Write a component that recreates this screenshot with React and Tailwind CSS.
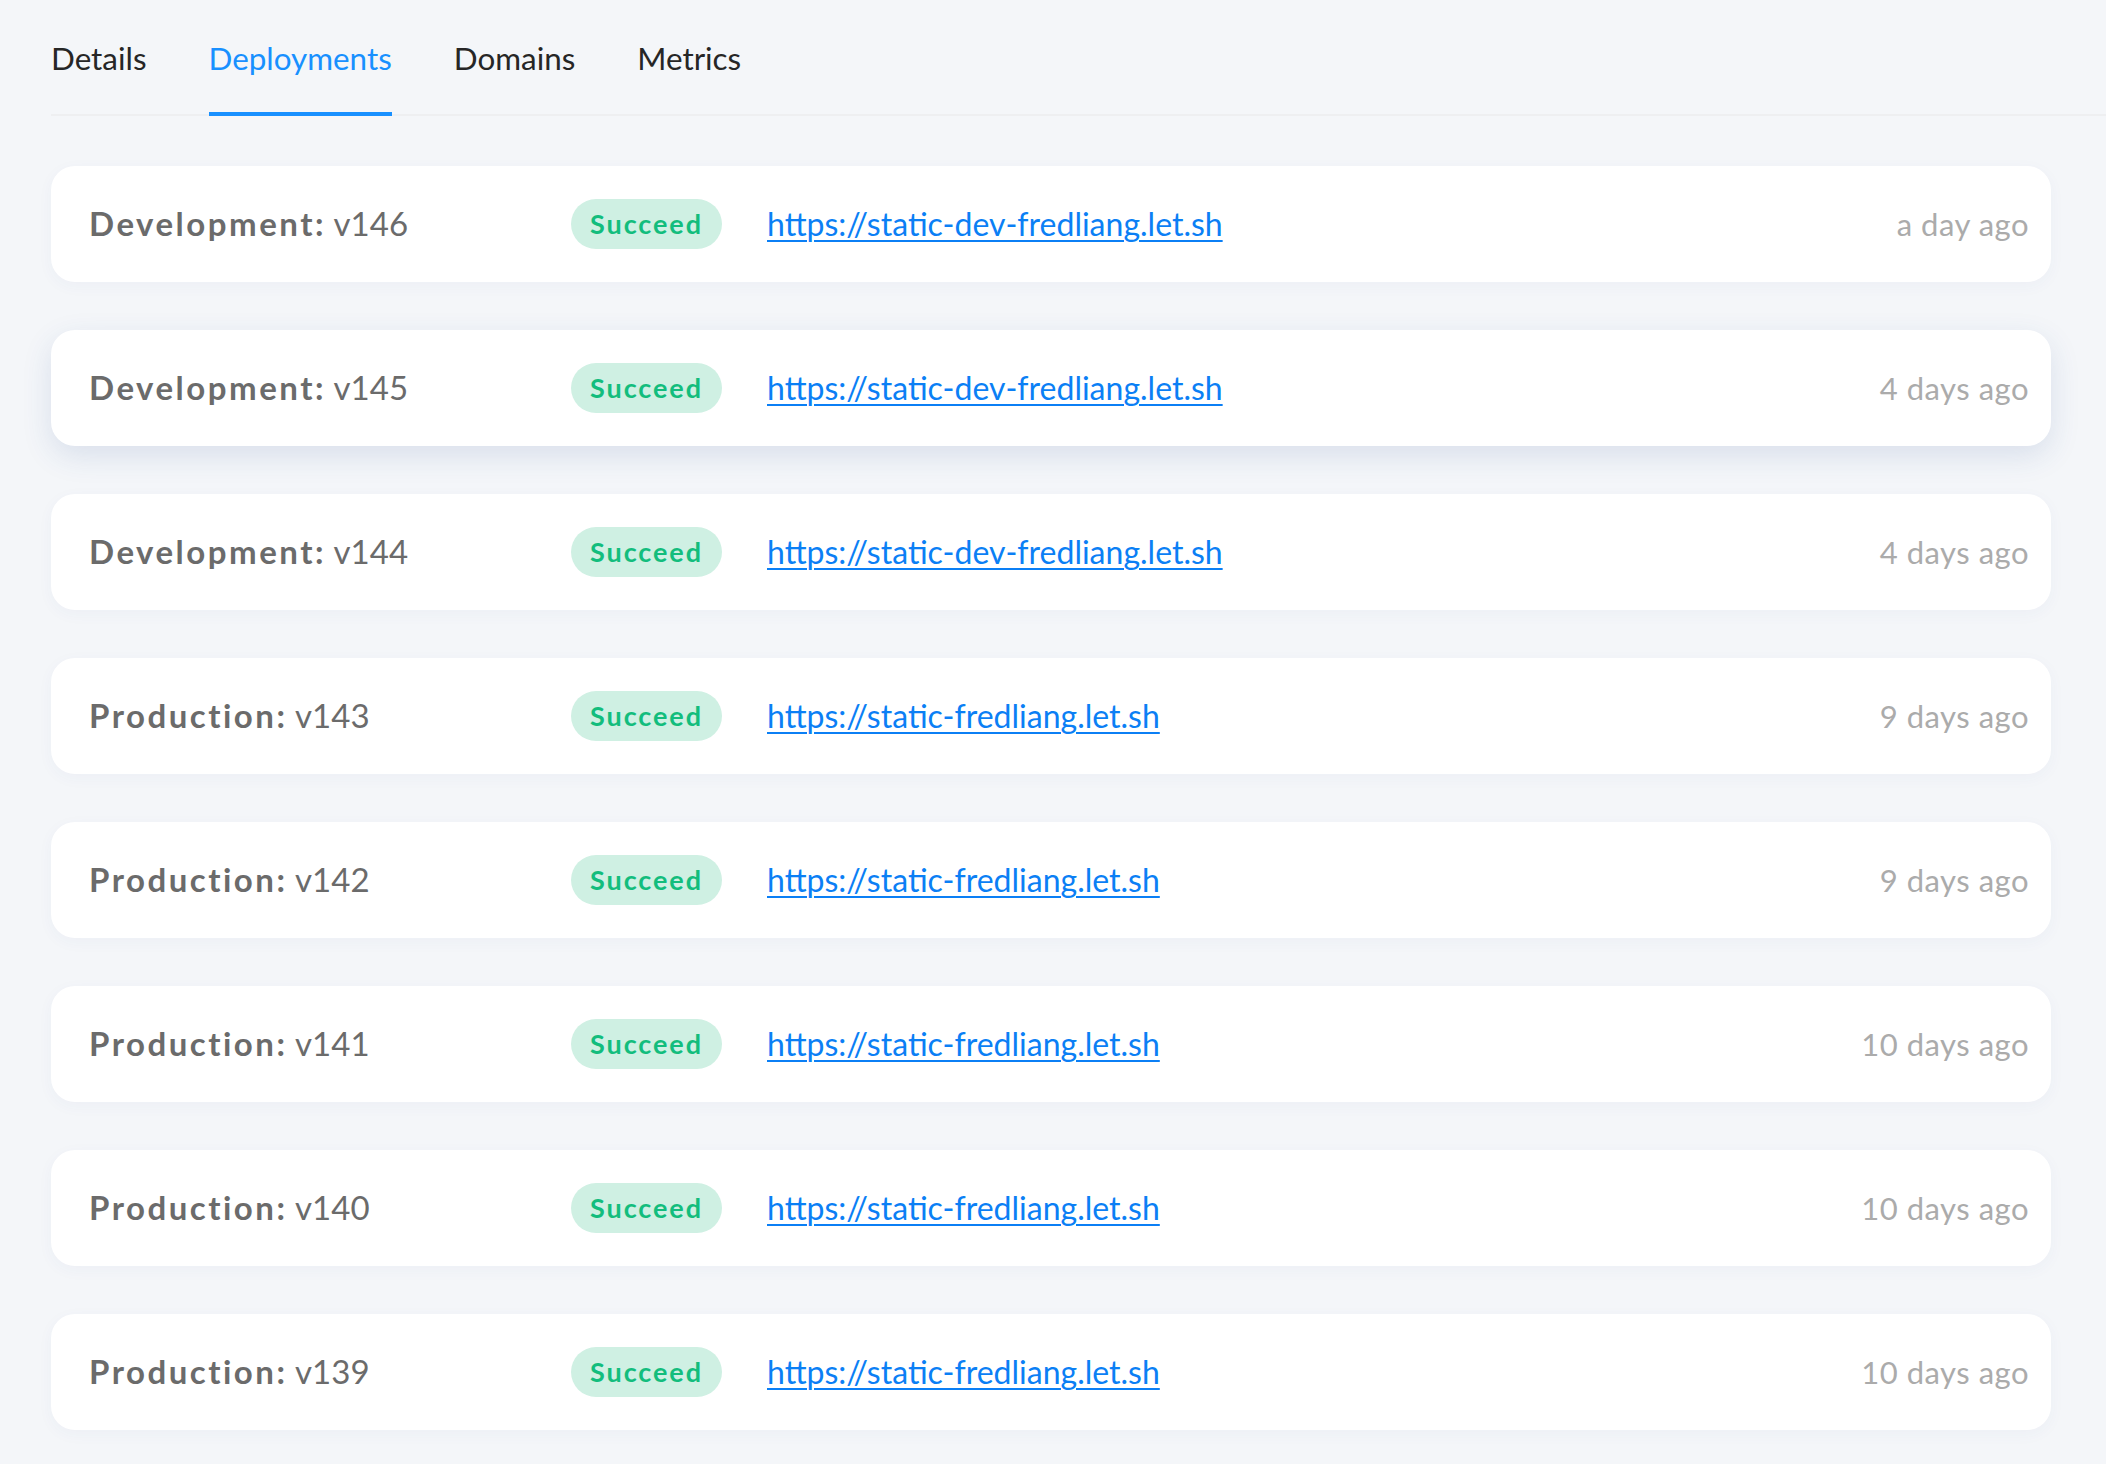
import React from "react";

const rows = [
  { env: "Development", v: "v146", url: "https://static-dev-fredliang.let.sh", t: "a day ago" },
  { env: "Development", v: "v145", url: "https://static-dev-fredliang.let.sh", t: "4 days ago", hover: true },
  { env: "Development", v: "v144", url: "https://static-dev-fredliang.let.sh", t: "4 days ago" },
  { env: "Production", v: "v143", url: "https://static-fredliang.let.sh", t: "9 days ago" },
  { env: "Production", v: "v142", url: "https://static-fredliang.let.sh", t: "9 days ago" },
  { env: "Production", v: "v141", url: "https://static-fredliang.let.sh", t: "10 days ago" },
  { env: "Production", v: "v140", url: "https://static-fredliang.let.sh", t: "10 days ago" },
  { env: "Production", v: "v139", url: "https://static-fredliang.let.sh", t: "10 days ago" },
];

const tabs = ["Details", "Deployments", "Domains", "Metrics"];

export default function App() {
  return (
    <div
      className="min-h-screen bg-[#f4f6f9] pb-[34px]"
      style={{ fontFamily: "Lato, 'Open Sans', sans-serif" }}
    >
      <div className="ml-[51px] flex h-[116px] gap-[62px] border-b-2 border-[#eeeff1]">
        {tabs.map((t) => (
          <div key={t} className="relative flex h-full items-center pt-[4px]">
            <span
              className={
                "text-[31.4px] " +
                (t === "Deployments" ? "text-[#1890ff]" : "text-[#262626]")
              }
            >
              {t}
            </span>
            {t === "Deployments" && (
              <div className="absolute bottom-[-2px] left-0 right-0 h-[4px] bg-[#1890ff]" />
            )}
          </div>
        ))}
      </div>

      <div className="ml-[51px] mr-[55px] mt-[50px] flex flex-col gap-[48px]">
        {rows.map((r) => (
          <div
            key={r.v}
            className={
              "flex h-[116px] items-center rounded-[24px] bg-white pl-[38px] pr-[22px] " +
              (r.hover
                ? "shadow-[0_10px_30px_rgba(40,80,150,0.13)]"
                : "shadow-[0_4px_16px_rgba(40,80,150,0.04)]")
            }
          >
            <div className="w-[482px] shrink-0 text-[33px] text-[#6b6b6b]">
              <span className="font-bold tracking-[2.5px]">{r.env}:</span> {r.v}
            </div>
            <div className="flex h-[50px] w-[151px] shrink-0 items-center justify-center rounded-full bg-[#cff0e3] text-[27px] font-bold tracking-[1.9px] text-[#13bd7d]">
              Succeed
            </div>
            <a
              href="#"
              className="ml-[45px] text-[32px] text-[#0b7ff5] underline decoration-2 underline-offset-[4px]"
            >
              {r.url}
            </a>
            <div className="flex-1 text-right text-[31px] tracking-[0.5px] text-[#ababab]">{r.t}</div>
          </div>
        ))}
      </div>
    </div>
  );
}
